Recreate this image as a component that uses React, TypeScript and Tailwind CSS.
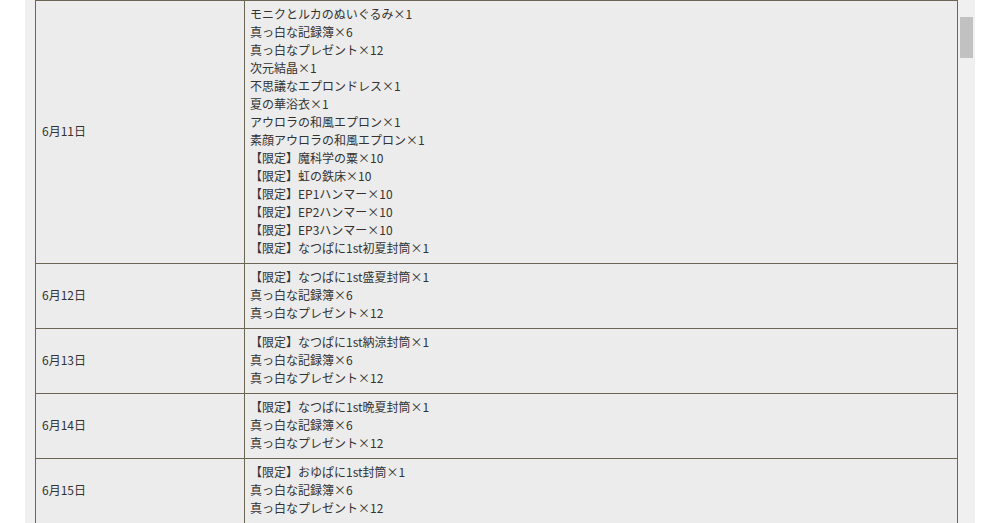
const rows: { date: string; items: string[] }[] = [
  {
    date: "6月11日",
    items: [
      "モニクとルカのぬいぐるみ×1",
      "真っ白な記録簿×6",
      "真っ白なプレゼント×12",
      "次元結晶×1",
      "不思議なエプロンドレス×1",
      "夏の華浴衣×1",
      "アウロラの和風エプロン×1",
      "素顔アウロラの和風エプロン×1",
      "【限定】魔科学の粟×10",
      "【限定】虹の鉄床×10",
      "【限定】EP1ハンマー×10",
      "【限定】EP2ハンマー×10",
      "【限定】EP3ハンマー×10",
      "【限定】なつぱに1st初夏封筒×1",
    ],
  },
  {
    date: "6月12日",
    items: ["【限定】なつぱに1st盛夏封筒×1", "真っ白な記録簿×6", "真っ白なプレゼント×12"],
  },
  {
    date: "6月13日",
    items: ["【限定】なつぱに1st納涼封筒×1", "真っ白な記録簿×6", "真っ白なプレゼント×12"],
  },
  {
    date: "6月14日",
    items: ["【限定】なつぱに1st晩夏封筒×1", "真っ白な記録簿×6", "真っ白なプレゼント×12"],
  },
  {
    date: "6月15日",
    items: ["【限定】おゆぱに1st封筒×1", "真っ白な記録簿×6", "真っ白なプレゼント×12"],
  },
];

export default function App() {
  return (
    <div
      className="h-[523px] w-full overflow-hidden bg-white text-[12px] leading-[18px] text-[#333]"
      style={{ fontFamily: '"Noto Sans CJK JP", "Noto Sans", sans-serif' }}
    >
      <div className="ml-[25px] flex w-[950px] bg-[#f0f0f0] pl-[10px]">
        <table className="w-[923px] table-fixed border-collapse bg-[#ececec]">
          <colgroup>
            <col className="w-[209px]" />
            <col />
          </colgroup>
          <tbody>
            {rows.map((r) => (
              <tr key={r.date}>
                <td className="border border-[#6b6654] px-[6px] pt-[4px] pb-[6px] align-middle">
                  {r.date}
                </td>
                <td className="border border-[#6b6654] px-[5px] pt-[4px] pb-[6px] align-top">
                  {r.items.map((it, i) => (
                    <div key={i}>{it}</div>
                  ))}
                </td>
              </tr>
            ))}
          </tbody>
        </table>
        <div className="w-[17px] shrink-0">
          <div className="mx-[2px] mt-[17px] h-[41px] bg-[#c1c1c1]" />
        </div>
      </div>
    </div>
  );
}
